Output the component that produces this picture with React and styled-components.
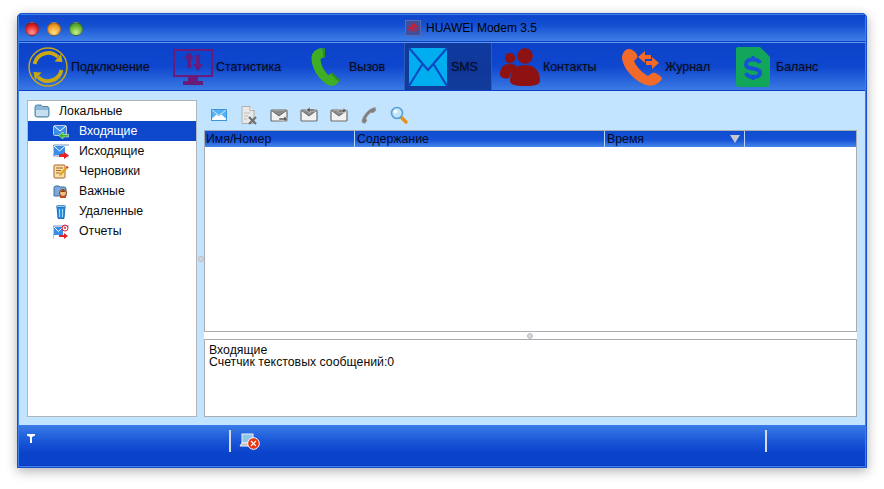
import React from "react";
import styled, { createGlobalStyle } from "styled-components";

const GlobalStyle = createGlobalStyle`
  html, body {
    margin: 0;
    padding: 0;
    background: #fff;
    font-family: "Liberation Sans", Arial, sans-serif;
  }
  * { box-sizing: border-box; }
`;

const Page = styled.div`
  width: 884px;
  height: 489px;
  padding: 13px 17px 21px;
  overflow: hidden;
`;

const Window = styled.div`
  width: 850px;
  height: 455px;
  display: flex;
  flex-direction: column;
  border: 2px solid #3f7fe8;
  outline: 1px solid #1a4fd0;
  outline-offset: -1px;
  border-radius: 5px 5px 0 0;
  box-shadow: 0 3px 12px rgba(0, 0, 0, 0.32);
  background: #c3e4ff;
`;

const TitleBar = styled.div`
  position: relative;
  height: 27px;
  flex: none;
  display: flex;
  align-items: center;
  justify-content: center;
  gap: 5px;
  padding-left: 58px;
  font-size: 12px;
  color: #000;
  background: linear-gradient(#0d45cb 0%, #1450d2 40%, #3f7fe6 100%);
  border-bottom: 1px solid #0c3fc4;
`;

const Lights = styled.div`
  position: absolute;
  left: 6px;
  top: 7px;
  display: flex;
  gap: 8px;
`;

const Light = styled.span`
  width: 14px;
  height: 14px;
  border-radius: 50%;
  border: 1px solid rgba(40, 40, 60, 0.4);
  background: radial-gradient(circle at 50% 80%, ${(p) => p.$glow} 0%, ${(p) => p.$base} 62%, ${(p) => p.$dark} 100%);
`;

const NavBar = styled.div`
  height: 49px;
  flex: none;
  display: flex;
  align-items: stretch;
  padding-left: 9px;
  background: linear-gradient(#0b42c8 0%, #0f47cf 50%, #3a7ae4 100%);
  border-top: 1px solid #5f95ee;
  border-bottom: 1px solid #0c3fc4;
`;

const NavItem = styled.div`
  width: ${(p) => p.$w}px;
  flex: none;
  display: flex;
  align-items: center;
  padding-left: ${(p) => p.$pad || 0}px;
  gap: ${(p) => p.$gap ?? 3}px;
  font-size: 12.4px;
  color: #060a1c;
  text-shadow: 0 0 2px rgba(10, 30, 90, 0.55);
  background: ${(p) => (p.$active ? "linear-gradient(#0f3a9e, #10389a 60%, #123c9c)" : "none")};
  box-shadow: ${(p) => (p.$active ? "inset 1px 0 0 #2a5cb8, inset -1px 0 0 #2a5cb8" : "none")};
  svg { flex: none; display: block; }
`;

const Content = styled.div`
  flex: 1;
  min-height: 0;
  display: flex;
  padding: 9px 8px 8px 8px;
`;

const Sidebar = styled.div`
  width: 170px;
  flex: none;
  background: #fff;
  border: 1px solid #aeb4b9;
  font-size: 12.3px;
  color: #0b0b0b;
`;

const TreeRow = styled.div`
  height: 20px;
  display: flex;
  align-items: center;
  padding-left: ${(p) => p.$indent}px;
  gap: ${(p) => p.$gap}px;
  background: ${(p) => (p.$selected ? "#0d47cc" : "transparent")};
  color: ${(p) => (p.$selected ? "#fff" : "#0b0b0b")};
  svg { flex: none; display: block; }
`;

const VSplit = styled.div`
  width: 7px;
  flex: none;
  display: flex;
  align-items: center;
  justify-content: center;
`;

const Knob = styled.span`
  width: 6px;
  height: 6px;
  border-radius: 50%;
  background: #d4d8da;
  border: 1px solid #b9bec2;
`;

const Main = styled.div`
  flex: 1;
  min-width: 0;
  display: flex;
  flex-direction: column;
`;

const ActionBar = styled.div`
  height: 30px;
  flex: none;
  display: flex;
  align-items: flex-start;
  padding: 5px 0 0 5px;
  gap: 10px;
  svg { flex: none; display: block; }
`;

const Table = styled.div`
  height: 202px;
  flex: none;
  background: #fff;
  border: 1px solid #a9adb2;
`;

const HeadRow = styled.div`
  height: 16px;
  display: flex;
  background: linear-gradient(#0f4ccf 0%, #1552d6 55%, #4585ea 100%);
  font-size: 12.3px;
  color: #020b26;
`;

const HeadCell = styled.div`
  width: ${(p) => p.$w}px;
  flex: ${(p) => (p.$grow ? 1 : "none")};
  display: flex;
  align-items: center;
  justify-content: space-between;
  padding: 0 4px 0 ${(p) => p.$pad ?? 2}px;
  border-right: ${(p) => (p.$grow ? "none" : "1px solid #b7d6fb")};
`;

const SortMark = styled.span`
  width: 0;
  height: 0;
  border-left: 5px solid transparent;
  border-right: 5px solid transparent;
  border-top: 8px solid #c6c9cc;
`;

const HSplit = styled.div`
  height: 7px;
  flex: none;
  display: flex;
  align-items: center;
  justify-content: center;
  padding-right: 2px;
  background: #fff;
`;

const Detail = styled.div`
  flex: 1;
  background: #fff;
  border: 1px solid #a9adb2;
  padding: 4px 4px;
  font-size: 12.3px;
  line-height: 12px;
  color: #0b0b0b;
`;

const StatusBar = styled.div`
  height: 41px;
  flex: none;
  display: flex;
  align-items: flex-start;
  padding-top: 5px;
  background: linear-gradient(#3a7ce6 0%, #1a57d8 40%, #0b42ca 70%, #0b42ca 100%);
  border-bottom: 1px solid #0a3cc0;
`;

const StatusCell = styled.div`
  width: ${(p) => p.$w}px;
  height: 22px;
  flex: ${(p) => (p.$grow ? 1 : "none")};
  display: flex;
  align-items: flex-start;
  padding-left: ${(p) => p.$pad}px;
  padding-top: ${(p) => p.$top || 0}px;
  border-right: ${(p) => (p.$rule ? "2px solid #d5dbe6" : "none")};
  svg { flex: none; display: block; }
`;

const SyncIcon = () => (
  <svg width="40" height="40" viewBox="0 0 40 40">
    <circle cx="20" cy="20" r="19" fill="none" stroke="#c9a810" strokeWidth="1.4" />
    <path d="M6.5 17 A14 14 0 0 1 30 10" fill="none" stroke="#c9a810" strokeWidth="3.8" />
    <path d="M26.500 14.500 L34.500 15 L33 7 Z" fill="#c9a810" />
    <path d="M33.500 23 A14 14 0 0 1 10 30" fill="none" stroke="#c9a810" strokeWidth="3.8" />
    <path d="M13.500 25.500 L5.500 25 L7 33 Z" fill="#c9a810" />
  </svg>
);

const StatsIcon = () => (
  <svg width="40" height="36" viewBox="0 0 40 36">
    <rect x="1" y="1" width="38" height="26" fill="none" stroke="#6a1a78" strokeWidth="2" />
    <path d="M15 27 H25 V32 H15 Z M10 32 H30 V36 H10 Z" fill="#6a1a78" />
    <path d="M16 3 L11 10 H14 V19 H18 V10 H21 Z" fill="#6a1a78" />
    <path d="M25 22 L30 15 H27 V6 H23 V15 H20 Z" fill="#6a1a78" />
  </svg>
);

const PhoneIcon = () => (
  <svg width="32" height="40" viewBox="0 0 32 40">
    <path
      d="M9 1.500 C5 3 1.500 6 1.500 11 C1.500 20 7 30 15 36 C19 39.500 23 39.500 26 37.500 L29.500 34 L21.500 26 L18.500 28.500 C14 24 11 18 10.500 12 L13.500 10.500 L12.500 1 Z"
      fill="#3fae22"
    />
    <path d="M13 1 H15 V10.500 H13 Z M22 25.500 L30.500 33.500 L29 35 L20.500 27 Z" fill="#2f8f1a" />
  </svg>
);

const MailIcon = () => (
  <svg width="40" height="40" viewBox="0 0 40 40">
    <rect x="1" y="1" width="38" height="38" fill="#00aeef" />
    <path d="M1 1 L20 23 L39 1 M1 39 L14.500 17 M39 39 L25.500 17" fill="none" stroke="#0c4ac4" strokeWidth="2.200" />
  </svg>
);

const PeopleIcon = () => (
  <svg width="40" height="38" viewBox="0 0 40 38">
    <circle cx="10" cy="10" r="5.200" fill="#8e1212" />
    <path d="M0 27 C0 19 4 16 10 16 C14 16 16 17 17 19 C13 22 10 25 9.500 30 C4 31 1 30 0 27 Z" fill="#8e1212" />
    <circle cx="25" cy="8" r="7.800" fill="#8e1212" />
    <path d="M10 33 C10 22 16 17 25 17 C34 17 40 22 40 33 C40 36 36 38 25 38 C14 38 10 36 10 33 Z" fill="#8e1212" />
  </svg>
);

const LogIcon = () => (
  <svg width="40" height="38" viewBox="0 0 40 38">
    <path
      d="M6 1 C2 2 0 6 0 10 C1 20 12 33 24 37 C30 38.500 36 37 40 31 C40 29 38 28 36 26.500 C33 24.500 31 24 29 26 L26 28 C20 25 14 18 12 13 L15 10 C16 8 15 6 13 4 C11 2 9 0.500 6 1 Z"
      fill="#f26a2a"
    />
    <path d="M16 9 L23 3 V7 H29 V11 H23 V15 Z" fill="#f26a2a" />
    <path d="M37 15 L30 9 V13 H24 V17 H30 V21 Z" fill="#f26a2a" />
  </svg>
);

const BalanceIcon = () => (
  <svg width="34" height="40" viewBox="0 0 34 40">
    <path d="M2 0 H24 L34 10 V37 A3 3 0 0 1 31 40 H3 A3 3 0 0 1 0 37 V2 A2 2 0 0 1 2 0 Z" fill="#12a65a" />
    <path
      d="M24 16 C23 13.500 20 12.500 17 12.500 C13 12.500 10 14 10 17.500 C10 23.500 24 19.500 24 26 C24 28.500 21 30 17 30 C14 30 11 28.500 10 26"
      fill="none"
      stroke="#1452d6"
      strokeWidth="4"
    />
    <path d="M15.500 9 H18.500 V13 H15.500 Z M15.500 29 H18.500 V33 H15.500 Z" fill="#1452d6" />
  </svg>
);

const HuaweiIcon = () => (
  <svg width="16" height="16" viewBox="0 0 16 16">
    <rect x="0.500" y="0.500" width="15" height="15" fill="#3f4f9e" stroke="#5a6ab0" />
    <path
      d="M8 12 L5.500 4 L7 3 L8 6 L9 3 L10.500 4 Z M8 12 L3 6 L4.500 5 Z M8 12 L13 6 L11.500 5 Z M7.500 12.500 L2 9 L3 8 Z M8.500 12.500 L14 9 L13 8 Z"
      fill="#d81c2c"
    />
  </svg>
);

const FolderIcon = () => (
  <svg width="16" height="14" viewBox="0 0 16 14">
    <path d="M1 3 Q1 1 3 1 H7 L8.500 2.500 H13 Q15 2.500 15 4.500 V11 Q15 13 13 13 H3 Q1 13 1 11 Z" fill="#8fb6d2" stroke="#4f86a8" />
    <path d="M2 6 H14 V11.500 Q14 12 13 12 H3 Q2 12 2 11.500 Z" fill="#c6e0f2" />
  </svg>
);

const Envelope = ({ x = 0, y = 0, w = 13, h = 10, fill = "#3a8ee8" }) => (
  <g transform={`translate(${x} ${y})`}>
    <rect x="0.500" y="0.500" width={w} height={h} rx="1" fill={fill} stroke="#fff" />
    <path d={`M1 1 L${w / 2 + 0.5} ${h / 2 + 1} L${w} 1`} fill="none" stroke="#fff" />
    <rect x="0" y="0" width={w + 1} height={h + 1} rx="1" fill="none" stroke="#1c4f9e" strokeWidth="0.600" />
  </g>
);

const InboxIcon = () => (
  <svg width="16" height="15" viewBox="0 0 16 15">
    <Envelope y="1" />
    <path d="M16 10.500 H10 V8 L5.500 11.500 L10 15 V13 H16 Z" fill="#3db52a" stroke="#fff" strokeWidth="0.500" />
  </svg>
);

const OutboxIcon = () => (
  <svg width="16" height="15" viewBox="0 0 16 15">
    <Envelope y="1" w="12" />
    <path d="M6 10 H11 V8 L16 11.500 L11 15 V13 H6 Z" fill="#e2232a" />
  </svg>
);

const DraftIcon = () => (
  <svg width="16" height="15" viewBox="0 0 16 15">
    <rect x="1" y="1" width="11" height="13" rx="1" fill="#f7dfa8" stroke="#a5662a" />
    <path d="M3 4 H10 M3 6.500 H8 M3 9 H7" stroke="#a5662a" />
    <path d="M6 12 L7 9 L14 2 L15.500 3.500 L8.500 11 Z" fill="#e8a020" />
    <path d="M14 2 L15.500 3.500 L14.500 4.500 L13 3 Z" fill="#d8232a" />
  </svg>
);

const ImportantIcon = () => (
  <svg width="16" height="15" viewBox="0 0 16 15">
    <path d="M1 4 Q1 2 3 2 H6 L7 3 H11 Q13 3 13 5 V12 H1 Z" fill="#7fa8d8" stroke="#3a6ea8" />
    <circle cx="10" cy="9" r="3.500" fill="#f0c080" stroke="#8a3a10" />
    <path d="M7.500 8 Q10 4 12.500 8 Z" fill="#8a3a10" />
    <rect x="7" y="12" width="6" height="2" fill="#c8481c" />
  </svg>
);

const TrashIcon = () => (
  <svg width="16" height="15" viewBox="0 0 16 15">
    <path d="M4 3 H12 L11 14.500 H5 Z" fill="#2a8ee0" stroke="#0f5aa8" strokeWidth="0.800" />
    <path d="M6.500 5 V13 M9.500 5 V13" stroke="#a8d8f8" />
    <rect x="3.500" y="1.500" width="9" height="2" rx="1" fill="#8fc8f0" stroke="#0f5aa8" strokeWidth="0.600" />
  </svg>
);

const ReportIcon = () => (
  <svg width="16" height="15" viewBox="0 0 16 15">
    <Envelope y="2" w="10" h="9" />
    <circle cx="12" cy="4" r="3" fill="none" stroke="#e2232a" />
    <circle cx="12" cy="4" r="1" fill="#e2232a" />
    <path d="M6 11 H11 V9 L15 12 L11 15 V13 H6 Z" fill="#e2232a" />
  </svg>
);

const NewMailTool = () => (
  <svg width="20" height="20" viewBox="0 0 20 20">
    <rect x="2.500" y="4.500" width="15" height="11" fill="#58b2f2" stroke="#3c94de" />
    <path d="M3 15 V13.500 L7.500 9.500 L10 11.500 L12.500 9.500 L17 13.500 V15 Z" fill="#fbfdff" />
    <path d="M3 5 L10 10.500 L17 5" fill="none" stroke="#eaf6ff" strokeWidth="0.800" />
  </svg>
);

const DeleteTool = () => (
  <svg width="20" height="20" viewBox="0 0 20 20">
    <path d="M3 1.500 H11 L15 5.500 V18.500 H3 Z" fill="#e8e8e8" stroke="#b0b0b0" />
    <path d="M11 1.500 V5.500 H15" fill="#fafafa" stroke="#b0b0b0" />
    <path d="M5 8 H11 M5 11 H9 M5 14 H8" stroke="#c0c0c0" />
    <path d="M10 12 L17 19 M17 12 L10 19" stroke="#707070" strokeWidth="2.200" />
  </svg>
);

const GrayMail = ({ children }) => (
  <svg width="20" height="20" viewBox="0 0 20 20">
    <rect x="2" y="5" width="16" height="11" rx="1" fill="#f2f2f2" stroke="#6c6c6c" strokeWidth="1.200" />
    <path d="M2.500 5.500 L10 11 L17.500 5.500" fill="#8a8a8a" stroke="#6c6c6c" />
    {children}
  </svg>
);

const PhoneTool = () => (
  <svg width="20" height="20" viewBox="0 0 20 20">
    <path
      d="M16.500 2.500 C11 2.500 5 9 3 15 L3 17.500 L6 18.500 L8 15.500 L7 13.500 C8 11 10.500 8.500 12 7.500 L14 8 L17 5.500 Z"
      fill="#808080"
      stroke="#a8a8a8"
      strokeWidth="0.500"
    />
  </svg>
);

const SearchTool = () => (
  <svg width="20" height="20" viewBox="0 0 20 20">
    <path d="M11 11 L17 17" stroke="#e89010" strokeWidth="3.400" strokeLinecap="round" />
    <circle cx="8" cy="8" r="5.500" fill="#c0e4fa" stroke="#5aa0d8" strokeWidth="1.600" />
    <circle cx="6.500" cy="6.500" r="2" fill="#f4fbff" />
  </svg>
);

const AntennaIcon = () => (
  <svg width="8" height="9" viewBox="0 0 8 9">
    <path d="M0 0 H8 V1.500 L5 3 V9 H3 V3 L0 1.500 Z" fill="#fff" />
  </svg>
);

const NetErrorIcon = () => (
  <svg width="21" height="17" viewBox="0 0 21 17">
    <rect x="3" y="1" width="11" height="9" fill="#8cc4ea" stroke="#eef2f6" />
    <path d="M1 13 L3 10 H14 L15 13 Z" fill="#b8bcc0" stroke="#f4f4f4" />
    <circle cx="14.500" cy="10.500" r="5.800" fill="#e83410" stroke="#fff" />
    <path d="M12 8 L17 13 M17 8 L12 13" stroke="#fff" strokeWidth="1.200" />
  </svg>
);

const navItems = [
  { label: "Подключение", Icon: SyncIcon, w: 145, pad: 0 },
  { label: "Статистика", Icon: StatsIcon, w: 124, pad: 0 },
  { label: "Вызов", Icon: PhoneIcon, w: 107, pad: 13, gap: 7 },
  { label: "SMS", Icon: MailIcon, w: 88, pad: 4, active: true },
  { label: "Контакты", Icon: PeopleIcon, w: 130, pad: 8 },
  { label: "Журнал", Icon: LogIcon, w: 114, pad: 0 },
  { label: "Баланс", Icon: BalanceIcon, w: 100, pad: 0, gap: 6 },
];

const folders = [
  { label: "Входящие", Icon: InboxIcon, selected: true },
  { label: "Исходящие", Icon: OutboxIcon },
  { label: "Черновики", Icon: DraftIcon },
  { label: "Важные", Icon: ImportantIcon },
  { label: "Удаленные", Icon: TrashIcon },
  { label: "Отчеты", Icon: ReportIcon },
];

export default function App() {
  return (
    <Page>
      <GlobalStyle />
      <Window>
        <TitleBar>
          <Lights>
            <Light $glow="#ff9a9a" $base="#e02020" $dark="#8a1010" />
            <Light $glow="#ffe08a" $base="#f09a20" $dark="#a8601a" />
            <Light $glow="#c8f08a" $base="#60b030" $dark="#2e7a18" />
          </Lights>
          <HuaweiIcon />
          <span>HUAWEI Modem 3.5</span>
        </TitleBar>

        <NavBar>
          {navItems.map(({ label, Icon, w, pad, gap, active }) => (
            <NavItem key={label} $w={w} $pad={pad} $gap={gap} $active={active}>
              <Icon />
              {label}
            </NavItem>
          ))}
        </NavBar>

        <Content>
          <Sidebar>
            <TreeRow $indent={6} $gap={9}>
              <FolderIcon />
              Локальные
            </TreeRow>
            {folders.map(({ label, Icon, selected }) => (
              <TreeRow key={label} $indent={25} $gap={10} $selected={selected}>
                <Icon />
                {label}
              </TreeRow>
            ))}
          </Sidebar>

          <VSplit>
            <Knob />
          </VSplit>

          <Main>
            <ActionBar>
              <NewMailTool />
              <DeleteTool />
              <GrayMail>
                <path d="M10 13 H15 V11 L19 14 L15 17 V15 H10 Z" fill="#5c5c5c" stroke="#f4f4f4" strokeWidth="0.500" />
              </GrayMail>
              <GrayMail>
                <path d="M16 4 H11 V2 L7 5 L11 8 V6 H16 Z" fill="#5c5c5c" stroke="#f4f4f4" strokeWidth="0.500" />
              </GrayMail>
              <GrayMail>
                <path d="M9 5 H14 V3 L18 5.500 L14 8 V7 H9 Z" fill="#5c5c5c" stroke="#f4f4f4" strokeWidth="0.500" />
              </GrayMail>
              <PhoneTool />
              <SearchTool />
            </ActionBar>

            <Table>
              <HeadRow>
                <HeadCell $w={150} $pad={1}>Имя/Номер</HeadCell>
                <HeadCell $w={250}>Содержание</HeadCell>
                <HeadCell $w={140}>
                  Время
                  <SortMark />
                </HeadCell>
                <HeadCell $grow />
              </HeadRow>
            </Table>

            <HSplit>
              <Knob />
            </HSplit>

            <Detail>
              Входящие
              <br />
              Счетчик текстовых сообщений:0
            </Detail>
          </Main>
        </Content>

        <StatusBar>
          <StatusCell $w={212} $pad={8} $top={4} $rule>
            <AntennaIcon />
          </StatusCell>
          <StatusCell $w={536} $pad={8} $top={3} $rule>
            <NetErrorIcon />
          </StatusCell>
          <StatusCell $grow />
        </StatusBar>
      </Window>
    </Page>
  );
}
